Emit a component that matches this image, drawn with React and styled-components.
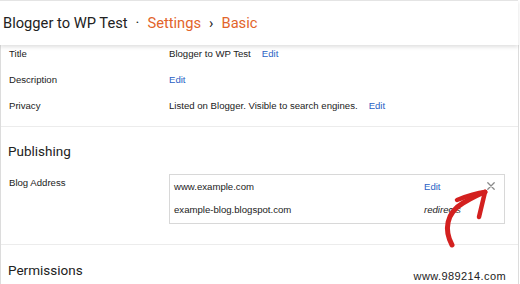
import React from 'react';
import styled, {createGlobalStyle} from 'styled-components';

const Global = createGlobalStyle`
  html, body { margin: 0; padding: 0; background: #fff; }
  body { width: 520px; height: 284px; overflow: hidden; font-family: 'Liberation Sans', Arial, sans-serif; }
`;

const basics = [
    {label: "Title", value: "Blogger to WP Test", edit: true},
    {label: "Description", value: null, edit: true},
    {label: "Privacy", value: "Listed on Blogger. Visible to search engines.", edit: true},
];

export default () => {
    return (<Screen>
        <Global/>
        <Header>
            <Crumb>Blogger to WP Test</Crumb>
            <Sep>·</Sep>
            <Crumb accent>Settings</Crumb>
            <Sep>›</Sep>
            <Crumb accent>Basic</Crumb>
        </Header>
        <Page>
            <Section pad="0 0 11px">
                {basics.map(row => (
                    <Row key={row.label}>
                        <Label>{row.label}</Label>
                        <Value>
                            {row.value && <span>{row.value}</span>}
                            {row.edit && <Link>Edit</Link>}
                        </Value>
                    </Row>
                ))}
            </Section>
            <Section pad="14px 0 20px">
                <Heading>Publishing</Heading>
                <Row top="13px">
                    <Label>Blog Address</Label>
                    <AddressBox>
                        <AddressRow>
                            <span>www.example.com</span>
                            <Link>Edit</Link>
                            <Close viewBox="0 0 10 10">
                                <path d="M1 1 L9 9 M9 1 L1 9" stroke="#8a8a8a" strokeWidth="1.6" strokeLinecap="round"/>
                            </Close>
                        </AddressRow>
                        <AddressRow>
                            <span>example-blog.blogspot.com</span>
                            <Note>redirects</Note>
                            <span/>
                        </AddressRow>
                    </AddressBox>
                </Row>
            </Section>
            <Section pad="15px 0 10px" last>
                <Heading>Permissions</Heading>
            </Section>
        </Page>
        <Arrow viewBox="0 0 60 70">
            <path d="M13 61 C5 46 7 29 24 19 C31 15 38 11 46 8" fill="none" stroke="#d3201f" strokeWidth="5" strokeLinecap="round"/>
            <path d="M18 16 C28 12 37 9 46 8" fill="none" stroke="#d3201f" strokeWidth="4.5" strokeLinecap="round"/>
            <path d="M46 8 C44 16 42 25 40 33" fill="none" stroke="#d3201f" strokeWidth="4.5" strokeLinecap="round"/>
        </Arrow>
        <Watermark>www.989214.com</Watermark>
    </Screen>);
}

const Screen = styled.div`
  position: relative;
  width: 520px; height: 284px;
  overflow: hidden;
  color: #222;
`;

const Header = styled.div`
  position: relative; z-index: 2;
  display: flex; align-items: center;
  width: 518px; height: 45px;
  padding-left: 3px; box-sizing: border-box;
  border-top: 1px solid #e4e4e4;
  background: #fff;
  box-shadow: 0 2px 4px rgba(0, 0, 0, 0.13);
  font-family: Roboto, 'Open Sans', sans-serif;
  font-size: 14.7px;
`;

const Crumb = styled.span`
  color: ${props => props.accent ? "#e2642a" : "#222"};
`;

const Sep = styled.span`
  margin: 0 8px;
  color: #222;
`;

const Page = styled.div`
  width: 519px; box-sizing: border-box;
  border-left: 1px solid #dcdcdc;
  border-right: 1px solid #dcdcdc;
  min-height: 239px;
`;

const Section = styled.div`
  padding: ${props => props.pad};
  border-bottom: ${props => props.last ? "none" : "1px solid #ececec"};
  display: flex; flex-direction: column; gap: 8px;
`;

const Row = styled.div`
  display: grid;
  grid-template-columns: 160px 336px;
  padding-left: 8px;
  margin-top: ${props => props.top || "0"};
  font-size: 9.6px;
  line-height: 18px;
`;

const Label = styled.div`
  color: #222;
  line-height: 12px;
  padding-top: 3px;
`;

const Value = styled.div`
  display: flex; gap: 11px;
  align-items: center;
  line-height: 18px;
`;

const Link = styled.span`
  color: #2a5fc4;
`;

const Note = styled.span`
  font-style: italic;
`;

const Heading = styled.div`
  padding-left: 7px;
  font-family: Roboto, 'Open Sans', sans-serif;
  font-size: 13.5px;
  line-height: 20px;
  color: #222;
  margin-bottom: -8px;
`;

const AddressBox = styled.div`
  border: 1px solid #d8d8d8;
  padding: 0 9px 2px 4px;
  box-sizing: border-box;
  height: 50px;
`;

const AddressRow = styled.div`
  display: grid;
  grid-template-columns: 1fr 63px 8px;
  align-items: center;
  height: 23px;
`;

const Close = styled.svg`
  width: 8px; height: 8px;
  margin-top: -2px;
`;

const Arrow = styled.svg`
  position: absolute;
  left: 439px; top: 184px;
  width: 60px; height: 70px;
  overflow: visible;
`;

const Watermark = styled.div`
  position: absolute;
  right: 14px; bottom: 2px;
  font-size: 11px;
  letter-spacing: 0.4px;
  color: #222;
`;
